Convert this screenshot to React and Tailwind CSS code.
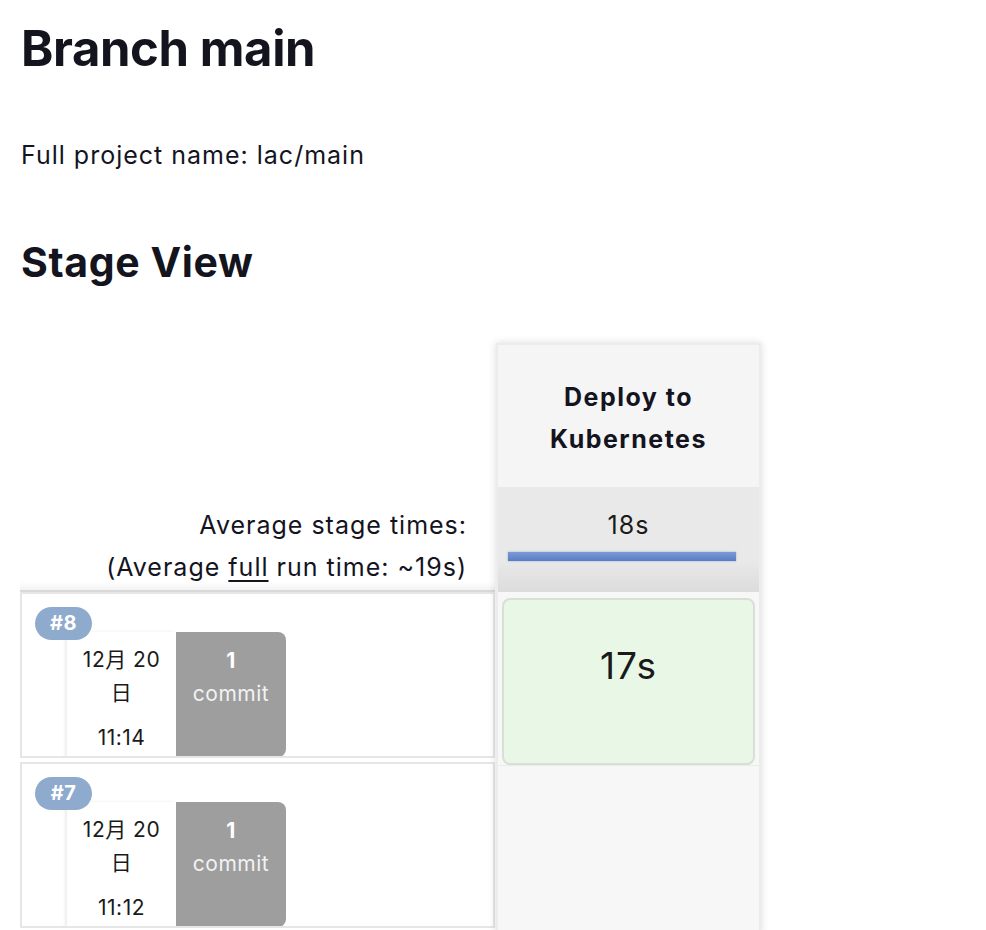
const font = { fontFamily: "Inter, 'Noto Sans CJK JP', sans-serif" };

const runs = [
  { id: 8, date: "12月 20", day: "日", time: "11:14", commits: 1, stage: "17s" },
  { id: 7, date: "12月 20", day: "日", time: "11:12", commits: 1, stage: null },
];

function RunCell({ run }) {
  return (
    <div className="h-[166px] border-2 border-[#e6e6e6] bg-white pl-[13px] pt-[13px] mb-[4px] overflow-hidden">
      <div className="relative z-10 w-[57px] h-[33px] rounded-full bg-[#8eaacd] text-white font-bold text-[20px] leading-[33px] text-center tracking-[0.5px]">
        #{run.id}
      </div>
      <div className="flex -mt-[8px] ml-[32px]">
        <div className="w-[109px] h-[125px] bg-white shadow-[-2px_0_3px_rgba(0,0,0,0.08)] text-[21px] tracking-[0.5px] text-[#1a1a1a] text-center pt-[11px]">
          <div className="leading-[33px]">{run.date}</div>
          <div className="leading-[33px]">{run.day}</div>
          <div className="leading-[33px] mt-[12px]">{run.time}</div>
        </div>
        <div className="w-[110px] h-[125px] bg-[#9e9e9e] rounded-r-lg text-center text-[21px] tracking-[0.5px] pt-[12px]">
          <div className="leading-[33px] font-bold text-white">{run.commits}</div>
          <div className="leading-[33px] text-[#f2f2f2]">commit</div>
        </div>
      </div>
    </div>
  );
}

export default function App() {
  return (
    <div className="min-h-[930px] bg-white text-[#14141f] px-[21px] pt-[17px]" style={font}>
      <h1 className="text-[49px] font-bold leading-[64px] tracking-[-0.4px]">Branch main</h1>
      <p className="mt-[58px] text-[25px] leading-[32px] tracking-[1px]">Full project name: lac/main</p>
      <h2 className="mt-[65px] text-[41px] font-bold leading-[52px] tracking-[0.6px]">Stage View</h2>

      <div className="mt-[55px] flex items-start">
        <div className="w-[475px] -ml-px">
          <div className="h-[144px]" />
          <div className="h-[105px] bg-white border-b-2 border-[#d9d9d9] shadow-[inset_0_-10px_8px_-8px_rgba(0,0,0,0.08)] text-right pr-[28px] pt-[17px] text-[25px] tracking-[1px] leading-[42px]">
            <div>Average stage times:</div>
            <div>
              (Average <span className="underline underline-offset-4">full</span> run time: ~19s)
            </div>
          </div>
          {runs.map((r) => (
            <RunCell key={r.id} run={r} />
          ))}
        </div>

        <div className="w-[265px] ml-px bg-[#f7f7f7] border-2 border-[#ececec] shadow-[0_0_8px_rgba(0,0,0,0.15)]">
          <div className="h-[142px] flex items-center justify-center text-center text-[25px] font-bold leading-[42px] tracking-[1.5px] bg-[#f5f5f5] pt-[4px]">
            Deploy to
            <br />
            Kubernetes
          </div>
          <div className="h-[105px] bg-gradient-to-b from-[#e9e9e9] from-70% to-[#dcdcdc] pt-[17px] text-center text-[25px] tracking-[1px] leading-[42px] text-[#1a1a1a]">
            18s
            <div className="mt-[6px] ml-[10px] w-[228px] h-[9px] bg-gradient-to-b from-[#7b9ad8] to-[#5b7cc0] shadow-[0_0_2px_rgba(91,124,192,0.5)]" />
          </div>
          <div className="h-[174px] px-[4px] pt-[6px] border-b border-[#ebebeb]">
            <div className="h-[167px] rounded-lg border-2 border-[#d8e0d6] bg-[#e9f7e6] text-center text-[37px] tracking-[1px] leading-[44px] text-[#1a1a1a] pt-[44px]">
              17s
            </div>
          </div>
          <div className="h-[166px]" />
        </div>
      </div>
    </div>
  );
}
